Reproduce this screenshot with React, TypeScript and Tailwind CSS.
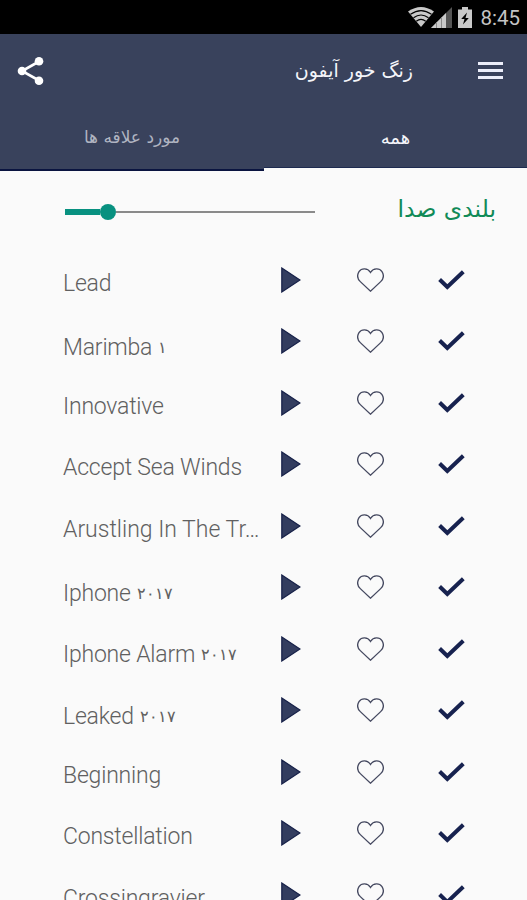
import { useState } from 'react';

type Tone = { name: string; digits?: string; long?: boolean };

const TONES: Tone[] = [
  { name: 'Lead' },
  { name: 'Marimba', digits: '۱' },
  { name: 'Innovative' },
  { name: 'Accept Sea Winds' },
  { name: 'Arustling In The Tr…', long: true },
  { name: 'Iphone', digits: '۲۰۱۷' },
  { name: 'Iphone Alarm', digits: '۲۰۱۷' },
  { name: 'Leaked', digits: '۲۰۱۷' },
  { name: 'Beginning' },
  { name: 'Constellation' },
  { name: 'Crossingravier' },
];

function StatusBar() {
  return (
    <div className="flex h-[34px] shrink-0 items-center justify-end bg-black pr-[7px] text-[#c4c4c4]">
      <svg className="mr-[-3px] h-[20px] w-[26px]" viewBox="0 0 26 20">
        <path d="M13 20 L0 4.5 Q13 -4.5 26 4.5 Z" fill="#c9c9c9" />
        <g fill="none" stroke="#000" strokeWidth="1.2">
          <path d="M2.5 7.3 Q13 -0.2 23.5 7.3" />
          <path d="M5.5 10.8 Q13 5.2 20.5 10.8" />
          <path d="M8.3 14.2 Q13 10.6 17.7 14.2" />
        </g>
      </svg>
      <svg className="h-[21px] w-[21px]" viewBox="0 0 21 21">
        <path d="M0 21 L21 0 V21 Z" fill="#555" />
        <path d="M0 21 L15 6 V21 Z" fill="#c9c9c9" />
        <path d="M5.5 15 V21 M10.5 10 V21" stroke="#8a8a8a" strokeWidth="1" />
      </svg>
      <svg className="ml-[6px] h-[21px] w-[14px]" viewBox="0 0 14 21">
        <path d="M4 0 H10 V2.5 H14 V21 H0 V2.5 H4 Z" fill="#c9c9c9" />
        <path d="M9 5.5 L3.2 12 H6.5 L5 17.5 L10.8 11 H7.5 Z" fill="#000" />
      </svg>
      <span className="ml-[8px] pt-[2px] font-[Roboto] text-[20.5px] leading-none">8:45</span>
    </div>
  );
}

function Header() {
  return (
    <header className="flex shrink-0 flex-col bg-[#39425c]">
      <div className="flex h-[73px] items-center pl-[17px] pr-[24px]">
        <svg className="h-[30px] w-[28px]" viewBox="0 0 28 30">
          <path d="M22 5.5 L5 15 L22 24.5" fill="none" stroke="#fff" strokeWidth="2.6" />
          <circle cx="22" cy="5.3" r="4.3" fill="#fff" />
          <circle cx="5" cy="15" r="4.3" fill="#fff" />
          <circle cx="22" cy="24.7" r="4.3" fill="#fff" />
        </svg>
        <h1
          dir="rtl"
          className="mr-[65px] ml-auto whitespace-nowrap font-['DejaVu_Sans',sans-serif] text-[19px] leading-none text-[#f4f5fa]"
        >
          زنگ خور آیفون
        </h1>
        <div className="flex w-[25px] flex-col gap-[4px]">
          <span className="h-[3px] bg-[#eceefa]" />
          <span className="h-[3px] bg-[#eceefa]" />
          <span className="h-[3px] bg-[#eceefa]" />
        </div>
      </div>
      <div className="flex h-[64px] items-start font-['DejaVu_Sans',sans-serif] text-[17px]">
        <button
          dir="rtl"
          className="h-[64px] w-[264px] border-b-2 border-[#0a1440] text-[#b0b4c1]"
        >
          <span className="block">مورد علاقه ها</span>
        </button>
        <div className="h-[64px] flex-1 bg-[#fafafa]">
          <button
            dir="rtl"
            className="h-[61px] w-full border-b border-[#1d2a50] bg-[#39425c] text-[18px] text-[#f4f5fa]"
          >
            همه
          </button>
        </div>
      </div>
    </header>
  );
}

function VolumeRow() {
  return (
    <div className="flex h-[78px] shrink-0 items-center pr-[31px] pl-[65px]">
      <div className="mt-[4px] flex w-[250px] items-center">
        <span className="h-[6px] w-[35px] bg-[#089180]" />
        <span className="size-[16px] rounded-full bg-[#089180]" />
        <span className="h-[2px] flex-1 bg-[#8a8a8a]" />
      </div>
      <span
        dir="rtl"
        className="ml-auto whitespace-nowrap font-['DejaVu_Sans',sans-serif] text-[23.5px] text-[#118a57]"
      >
        بلندی صدا
      </span>
    </div>
  );
}

function ToneRow({ tone }: { tone: Tone }) {
  const [playing, setPlaying] = useState(false);

  return (
    <li className="flex h-[61.5px] shrink-0 items-center pl-[63px]">
      <div
        className={`w-[200px] font-[Roboto] text-[23px] leading-[30px] font-light whitespace-nowrap text-[#606060] ${
          tone.digits ? 'pt-[13px]' : 'pt-[8px]'
        } ${tone.long ? 'tracking-normal' : 'tracking-[-0.2px]'}`}
      >
        {tone.name}
        {tone.digits ? (
          <span className="relative top-[-2px] ml-[6px] font-['DejaVu_Sans',sans-serif] text-[16px] leading-none">
            {tone.digits}
          </span>
        ) : null}
      </div>
      <button className="ml-[18px]" onClick={() => setPlaying(!playing)}>
        <svg className="h-[26px] w-[20px]" viewBox="0 0 20 26">
          <path d="M0.8 1 L19 13 L0.8 25 Z" fill="#333d5f" stroke="#162048" strokeWidth="1.2" />
        </svg>
      </button>
      <button className="ml-[56px]">
        <svg className="h-[24px] w-[27px]" viewBox="0 0 27 24">
          <path
            d="M13.5 4.5 C10.5 -0.2 4.5 0 2 3.7 C0 7 0.6 11 3.3 13.6 L13.5 23.2 L23.7 13.6 C26.4 11 27 7 25 3.7 C22.5 0 16.5 -0.2 13.5 4.5 Z"
            fill="none"
            stroke="#454960"
            strokeWidth="1.3"
          />
        </svg>
      </button>
      <button className="ml-[54px]">
        <svg className="h-[20px] w-[27px]" viewBox="0 0 27 20">
          <path d="M1.6 9.5 L9.3 17 L25.3 1.7" fill="none" stroke="#17224f" strokeWidth="4" />
        </svg>
      </button>
    </li>
  );
}

export default function App() {
  return (
    <div className="flex h-[900px] w-[527px] flex-col overflow-hidden bg-[#fafafa]">
      <StatusBar />
      <Header />
      <VolumeRow />
      <ul className="flex flex-col">
        {TONES.map((t, i) => (
          <ToneRow key={i} tone={t} />
        ))}
      </ul>
    </div>
  );
}
